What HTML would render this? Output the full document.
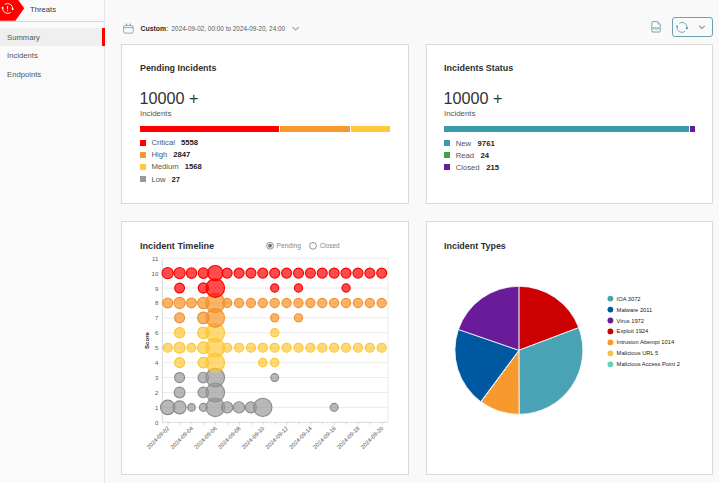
<!DOCTYPE html>
<html><head><meta charset="utf-8"><title>Threats - Summary</title>
<style>
html,body{margin:0;padding:0;}
body{width:719px;height:483px;overflow:hidden;position:relative;background:#f9f9f9;font-family:"Liberation Sans", sans-serif;}
</style></head><body>
<div style="position:absolute;left:0;top:0;width:104px;height:483px;background:#fafafa;border-right:1.5px solid #e6e6e6;"></div>
<div style="position:absolute;left:0;top:21px;width:104px;height:1px;background:#d6d6d6;"></div>
<svg style="position:absolute;left:0;top:0" width="30" height="22" viewBox="0 0 30 22">
<polygon points="0,-4.2 15.2,-4.2 24.2,8.3 15.4,20.8 0,20.8" fill="#ff0000"/>
<path d="M4.8,4.3 A5.1,5.1 0 0 1 12.6,9.3" fill="none" stroke="#fff" stroke-width="0.9"/>
<path d="M2.6,7.9 A5.1,5.1 0 0 0 10.6,12.5" fill="none" stroke="#fff" stroke-width="0.9"/>
<circle cx="2.6" cy="7.8" r="1.0" fill="#fff"/>
<circle cx="12.7" cy="9.1" r="1.0" fill="#fff"/>
<rect x="7.15" y="5.9" width="0.9" height="3.5" fill="#fff"/>
<rect x="7.15" y="10.3" width="0.9" height="1.0" fill="#fff"/>
</svg>
<div style="position:absolute;left:30px;top:4.73px;font-size:7.7px;line-height:normal;white-space:nowrap;color:#3a3a3a;font-weight:400;">Threats</div>
<div style="position:absolute;left:0;top:28px;width:102px;height:18px;background:#efefef;"></div>
<div style="position:absolute;left:102px;top:27.5px;width:2.5px;height:18.5px;background:#ff0000;"></div>
<div style="position:absolute;left:7px;top:33.03px;font-size:7.7px;line-height:normal;white-space:nowrap;color:#555;font-weight:400;">Summary</div>
<div style="position:absolute;left:7px;top:51.03px;font-size:7.7px;line-height:normal;white-space:nowrap;color:#555;font-weight:400;">Incidents</div>
<div style="position:absolute;left:7px;top:69.53px;font-size:7.7px;line-height:normal;white-space:nowrap;color:#555;font-weight:400;">Endpoints</div>
<svg style="position:absolute;left:122px;top:22px" width="14" height="13" viewBox="0 0 14 13">
<rect x="1.55" y="3.45" width="9.6" height="7.7" rx="1.9" fill="none" stroke="#6fa9b3" stroke-width="0.9"/>
<line x1="1.55" y1="5.6" x2="11.15" y2="5.6" stroke="#6fa9b3" stroke-width="0.9"/>
<line x1="4.5" y1="1.5" x2="4.5" y2="3.6" stroke="#6fa9b3" stroke-width="1"/>
<line x1="8.4" y1="1.5" x2="8.4" y2="3.6" stroke="#6fa9b3" stroke-width="1"/>
</svg>
<div style="position:absolute;left:140.5px;top:24.96px;font-size:6.9px;line-height:normal;white-space:nowrap;color:#2b2b2b;font-weight:700;">Custom<span style="font-weight:400">:</span></div>
<div style="position:absolute;left:171.5px;top:25.39px;font-size:6.42px;line-height:normal;white-space:nowrap;color:#5a5a5a;font-weight:400;">2024-09-02, 00:00 to 2024-09-20, 24:00</div>
<svg style="position:absolute;left:291px;top:24px" width="10" height="8" viewBox="0 0 10 8">
<polyline points="1.4,3.1 4.6,5.8 7.8,3.1" fill="none" stroke="#6fa9b3" stroke-width="1.1"/></svg>
<svg style="position:absolute;left:650px;top:20px" width="13" height="14" viewBox="0 0 13 14">
<path d="M1.9,2.7 Q1.9,1.7 2.9,1.7 L7.6,1.7 L10.2,4.3 L10.2,11.0 Q10.2,12.0 9.2,12.0 L2.9,12.0 Q1.9,12.0 1.9,11.0 Z" fill="#fff" stroke="#5f9ea8" stroke-width="0.95"/>
<path d="M7.7,2.6 L7.7,4.2 L9.3,4.2" fill="none" stroke="#5f9ea8" stroke-width="0.6"/>
<text x="2.7" y="9.8" font-size="4.0" font-weight="700" textLength="6.6" lengthAdjust="spacingAndGlyphs" fill="#5f9ea8" font-family="Liberation Sans">PDF</text>
</svg>
<div style="position:absolute;left:672px;top:17px;width:41px;height:19.6px;border:1px solid #6aa3ad;border-radius:3px;box-sizing:border-box;"></div>
<svg style="position:absolute;left:672px;top:18px" width="40" height="18" viewBox="0 0 40 18">
<path d="M7.28,5.21 A5.0,5.0 0 0 1 14.95,10.10" fill="none" stroke="#6aa3ad" stroke-width="0.9"/>
<path d="M5.06,8.62 A5.0,5.0 0 0 0 13.08,13.34" fill="none" stroke="#6aa3ad" stroke-width="0.9"/>
<circle cx="5.06" cy="8.62" r="1.0" fill="#5f9ea8"/>
<circle cx="14.92" cy="10.27" r="1.05" fill="#4f8f99"/>
<polyline points="27.2,7.8 30.0,10.6 32.8,7.8" fill="none" stroke="#444" stroke-width="0.9"/>
</svg>
<div style="position:absolute;left:121px;top:43.5px;width:288px;height:160.5px;background:#fff;border:1px solid #dadada;box-sizing:border-box;"></div>
<div style="position:absolute;left:425.5px;top:43.5px;width:287.5px;height:160.5px;background:#fff;border:1px solid #dadada;box-sizing:border-box;"></div>
<div style="position:absolute;left:121px;top:220.5px;width:288px;height:254px;background:#fff;border:1px solid #dadada;box-sizing:border-box;"></div>
<div style="position:absolute;left:425.5px;top:220.5px;width:287.5px;height:254px;background:#fff;border:1px solid #dadada;box-sizing:border-box;"></div>
<div style="position:absolute;left:140px;top:62.85px;font-size:8.9px;line-height:normal;white-space:nowrap;color:#2e2e2e;font-weight:700;">Pending Incidents</div>
<div style="position:absolute;left:139.5px;top:89.44px;font-size:16.2px;line-height:normal;white-space:nowrap;color:#333;font-weight:400;">10000 +</div>
<div style="position:absolute;left:140px;top:108.50px;font-size:7.85px;line-height:normal;white-space:nowrap;color:#555;font-weight:400;">Incidents</div>
<div style="position:absolute;left:139.5px;top:126px;width:139.5px;height:6px;background:#ff0000;"></div>
<div style="position:absolute;left:279.5px;top:126px;width:70.5px;height:6px;background:#f7992d;"></div>
<div style="position:absolute;left:350.5px;top:126px;width:39.5px;height:6px;background:#ffc83d;"></div>
<div style="position:absolute;left:139.5px;top:139.7px;width:6px;height:6px;background:#ff0000;"></div>
<div style="position:absolute;left:151.4px;top:138.23px;font-size:7.7px;white-space:nowrap;color:#555;">Critical<b style="color:#222;margin-left:6px">5558</b></div>
<div style="position:absolute;left:139.5px;top:151.8px;width:6px;height:6px;background:#f7992d;"></div>
<div style="position:absolute;left:151.4px;top:150.33px;font-size:7.7px;white-space:nowrap;color:#555;">High<b style="color:#222;margin-left:6px">2847</b></div>
<div style="position:absolute;left:139.5px;top:163.9px;width:6px;height:6px;background:#ffc83d;"></div>
<div style="position:absolute;left:151.4px;top:162.43px;font-size:7.7px;white-space:nowrap;color:#555;">Medium<b style="color:#222;margin-left:6px">1568</b></div>
<div style="position:absolute;left:139.5px;top:176.0px;width:6px;height:6px;background:#999999;"></div>
<div style="position:absolute;left:151.4px;top:174.53px;font-size:7.7px;white-space:nowrap;color:#555;">Low<b style="color:#222;margin-left:6px">27</b></div>
<div style="position:absolute;left:444px;top:62.78px;font-size:8.97px;line-height:normal;white-space:nowrap;color:#2e2e2e;font-weight:700;">Incidents Status</div>
<div style="position:absolute;left:443.5px;top:89.44px;font-size:16.2px;line-height:normal;white-space:nowrap;color:#333;font-weight:400;">10000 +</div>
<div style="position:absolute;left:444px;top:108.50px;font-size:7.85px;line-height:normal;white-space:nowrap;color:#555;font-weight:400;">Incidents</div>
<div style="position:absolute;left:444px;top:126px;width:245px;height:6px;background:#3a9bab;"></div>
<div style="position:absolute;left:689.8px;top:126px;width:5px;height:6px;background:#6a1b9a;"></div>
<div style="position:absolute;left:443.5px;top:140.0px;width:6px;height:6px;background:#3a9bab;"></div>
<div style="position:absolute;left:455.7px;top:138.53px;font-size:7.7px;white-space:nowrap;color:#555;">New<b style="color:#222;margin-left:6.5px">9761</b></div>
<div style="position:absolute;left:443.5px;top:152.1px;width:6px;height:6px;background:#43a047;"></div>
<div style="position:absolute;left:455.7px;top:150.63px;font-size:7.7px;white-space:nowrap;color:#555;">Read<b style="color:#222;margin-left:6.5px">24</b></div>
<div style="position:absolute;left:443.5px;top:164.2px;width:6px;height:6px;background:#6a1b9a;"></div>
<div style="position:absolute;left:455.7px;top:162.73px;font-size:7.7px;white-space:nowrap;color:#555;">Closed<b style="color:#222;margin-left:6.5px">215</b></div>
<div style="position:absolute;left:140px;top:240.66px;font-size:9.1px;line-height:normal;white-space:nowrap;color:#2e2e2e;font-weight:700;">Incident Timeline</div>
<div style="position:absolute;left:444px;top:240.71px;font-size:8.94px;line-height:normal;white-space:nowrap;color:#2e2e2e;font-weight:700;">Incident Types</div>
<svg style="position:absolute;left:0;top:0" width="719" height="483" viewBox="0 0 719 483">
<circle cx="270" cy="245.8" r="3.4" fill="#fff" stroke="#777" stroke-width="0.8"/>
<circle cx="270" cy="245.8" r="2.0" fill="#777"/>
<circle cx="313" cy="245.8" r="3.4" fill="#fff" stroke="#777" stroke-width="0.8"/>
<text x="276.6" y="248.1" font-size="6.6" fill="#888" font-family="Liberation Sans">Pending</text>
<text x="319.7" y="248.1" font-size="6.4" fill="#888" font-family="Liberation Sans">Closed</text>
<line x1="162.3" y1="407.38" x2="388.0" y2="407.38" stroke="#e6e6e6" stroke-width="0.8"/>
<line x1="162.3" y1="392.46" x2="388.0" y2="392.46" stroke="#e6e6e6" stroke-width="0.8"/>
<line x1="162.3" y1="377.55" x2="388.0" y2="377.55" stroke="#e6e6e6" stroke-width="0.8"/>
<line x1="162.3" y1="362.63" x2="388.0" y2="362.63" stroke="#e6e6e6" stroke-width="0.8"/>
<line x1="162.3" y1="347.71" x2="388.0" y2="347.71" stroke="#e6e6e6" stroke-width="0.8"/>
<line x1="162.3" y1="332.79" x2="388.0" y2="332.79" stroke="#e6e6e6" stroke-width="0.8"/>
<line x1="162.3" y1="317.87" x2="388.0" y2="317.87" stroke="#e6e6e6" stroke-width="0.8"/>
<line x1="162.3" y1="302.95" x2="388.0" y2="302.95" stroke="#e6e6e6" stroke-width="0.8"/>
<line x1="162.3" y1="288.04" x2="388.0" y2="288.04" stroke="#e6e6e6" stroke-width="0.8"/>
<line x1="162.3" y1="273.12" x2="388.0" y2="273.12" stroke="#e6e6e6" stroke-width="0.8"/>
<line x1="162.3" y1="258.20" x2="388.0" y2="258.20" stroke="#e6e6e6" stroke-width="0.8"/>
<line x1="388.0" y1="258.2" x2="388.0" y2="422.3" stroke="#e6e6e6" stroke-width="0.8"/>
<line x1="162.3" y1="258.2" x2="162.3" y2="422.3" stroke="#d0d0d0" stroke-width="0.8"/>
<line x1="162.3" y1="422.3" x2="388.0" y2="422.3" stroke="#d0d0d0" stroke-width="0.8"/>
<line x1="168.10" y1="422.3" x2="168.10" y2="424.90000000000003" stroke="#c8c8c8" stroke-width="0.7"/>
<line x1="179.99" y1="422.3" x2="179.99" y2="424.90000000000003" stroke="#c8c8c8" stroke-width="0.7"/>
<line x1="191.88" y1="422.3" x2="191.88" y2="424.90000000000003" stroke="#c8c8c8" stroke-width="0.7"/>
<line x1="203.77" y1="422.3" x2="203.77" y2="424.90000000000003" stroke="#c8c8c8" stroke-width="0.7"/>
<line x1="215.66" y1="422.3" x2="215.66" y2="424.90000000000003" stroke="#c8c8c8" stroke-width="0.7"/>
<line x1="227.55" y1="422.3" x2="227.55" y2="424.90000000000003" stroke="#c8c8c8" stroke-width="0.7"/>
<line x1="239.44" y1="422.3" x2="239.44" y2="424.90000000000003" stroke="#c8c8c8" stroke-width="0.7"/>
<line x1="251.33" y1="422.3" x2="251.33" y2="424.90000000000003" stroke="#c8c8c8" stroke-width="0.7"/>
<line x1="263.22" y1="422.3" x2="263.22" y2="424.90000000000003" stroke="#c8c8c8" stroke-width="0.7"/>
<line x1="275.11" y1="422.3" x2="275.11" y2="424.90000000000003" stroke="#c8c8c8" stroke-width="0.7"/>
<line x1="287.00" y1="422.3" x2="287.00" y2="424.90000000000003" stroke="#c8c8c8" stroke-width="0.7"/>
<line x1="298.89" y1="422.3" x2="298.89" y2="424.90000000000003" stroke="#c8c8c8" stroke-width="0.7"/>
<line x1="310.78" y1="422.3" x2="310.78" y2="424.90000000000003" stroke="#c8c8c8" stroke-width="0.7"/>
<line x1="322.67" y1="422.3" x2="322.67" y2="424.90000000000003" stroke="#c8c8c8" stroke-width="0.7"/>
<line x1="334.56" y1="422.3" x2="334.56" y2="424.90000000000003" stroke="#c8c8c8" stroke-width="0.7"/>
<line x1="346.45" y1="422.3" x2="346.45" y2="424.90000000000003" stroke="#c8c8c8" stroke-width="0.7"/>
<line x1="358.34" y1="422.3" x2="358.34" y2="424.90000000000003" stroke="#c8c8c8" stroke-width="0.7"/>
<line x1="370.23" y1="422.3" x2="370.23" y2="424.90000000000003" stroke="#c8c8c8" stroke-width="0.7"/>
<line x1="382.12" y1="422.3" x2="382.12" y2="424.90000000000003" stroke="#c8c8c8" stroke-width="0.7"/>
<text x="158.3" y="424.80" font-size="6" text-anchor="end" fill="#555" font-family="Liberation Sans">0</text>
<text x="158.3" y="409.88" font-size="6" text-anchor="end" fill="#555" font-family="Liberation Sans">1</text>
<text x="158.3" y="394.96" font-size="6" text-anchor="end" fill="#555" font-family="Liberation Sans">2</text>
<text x="158.3" y="380.05" font-size="6" text-anchor="end" fill="#555" font-family="Liberation Sans">3</text>
<text x="158.3" y="365.13" font-size="6" text-anchor="end" fill="#555" font-family="Liberation Sans">4</text>
<text x="158.3" y="350.21" font-size="6" text-anchor="end" fill="#555" font-family="Liberation Sans">5</text>
<text x="158.3" y="335.29" font-size="6" text-anchor="end" fill="#555" font-family="Liberation Sans">6</text>
<text x="158.3" y="320.37" font-size="6" text-anchor="end" fill="#555" font-family="Liberation Sans">7</text>
<text x="158.3" y="305.45" font-size="6" text-anchor="end" fill="#555" font-family="Liberation Sans">8</text>
<text x="158.3" y="290.54" font-size="6" text-anchor="end" fill="#555" font-family="Liberation Sans">9</text>
<text x="158.3" y="275.62" font-size="6" text-anchor="end" fill="#555" font-family="Liberation Sans">10</text>
<text x="158.3" y="260.70" font-size="6" text-anchor="end" fill="#555" font-family="Liberation Sans">11</text>
<text transform="translate(148.5,340.5) rotate(-90)" font-size="6.1" font-weight="700" text-anchor="middle" fill="#222" font-family="Liberation Sans">Score</text>
<text transform="translate(169.70,428.7) rotate(-45)" font-size="5.75" text-anchor="end" fill="#555" font-family="Liberation Sans">2024-09-02</text>
<text transform="translate(193.48,428.7) rotate(-45)" font-size="5.75" text-anchor="end" fill="#555" font-family="Liberation Sans">2024-09-04</text>
<text transform="translate(217.26,428.7) rotate(-45)" font-size="5.75" text-anchor="end" fill="#555" font-family="Liberation Sans">2024-09-06</text>
<text transform="translate(241.04,428.7) rotate(-45)" font-size="5.75" text-anchor="end" fill="#555" font-family="Liberation Sans">2024-09-08</text>
<text transform="translate(264.82,428.7) rotate(-45)" font-size="5.75" text-anchor="end" fill="#555" font-family="Liberation Sans">2024-09-10</text>
<text transform="translate(288.60,428.7) rotate(-45)" font-size="5.75" text-anchor="end" fill="#555" font-family="Liberation Sans">2024-09-12</text>
<text transform="translate(312.38,428.7) rotate(-45)" font-size="5.75" text-anchor="end" fill="#555" font-family="Liberation Sans">2024-09-14</text>
<text transform="translate(336.16,428.7) rotate(-45)" font-size="5.75" text-anchor="end" fill="#555" font-family="Liberation Sans">2024-09-16</text>
<text transform="translate(359.94,428.7) rotate(-45)" font-size="5.75" text-anchor="end" fill="#555" font-family="Liberation Sans">2024-09-18</text>
<text transform="translate(383.72,428.7) rotate(-45)" font-size="5.75" text-anchor="end" fill="#555" font-family="Liberation Sans">2024-09-20</text>
<circle cx="167.70" cy="407.38" r="7.20" fill="rgba(150,150,150,0.68)" stroke="#8c8c8c" stroke-opacity="1" stroke-width="1.15"/>
<circle cx="179.59" cy="407.38" r="6.50" fill="rgba(150,150,150,0.68)" stroke="#8c8c8c" stroke-opacity="1" stroke-width="1.15"/>
<circle cx="191.48" cy="407.38" r="3.80" fill="rgba(150,150,150,0.68)" stroke="#8c8c8c" stroke-opacity="1" stroke-width="1.15"/>
<circle cx="203.37" cy="407.38" r="4.00" fill="rgba(150,150,150,0.68)" stroke="#8c8c8c" stroke-opacity="1" stroke-width="1.15"/>
<circle cx="215.26" cy="407.38" r="9.30" fill="rgba(150,150,150,0.68)" stroke="#8c8c8c" stroke-opacity="1" stroke-width="1.15"/>
<circle cx="227.15" cy="407.38" r="5.60" fill="rgba(150,150,150,0.68)" stroke="#8c8c8c" stroke-opacity="1" stroke-width="1.15"/>
<circle cx="239.04" cy="407.38" r="5.60" fill="rgba(150,150,150,0.68)" stroke="#8c8c8c" stroke-opacity="1" stroke-width="1.15"/>
<circle cx="250.93" cy="407.38" r="5.50" fill="rgba(150,150,150,0.68)" stroke="#8c8c8c" stroke-opacity="1" stroke-width="1.15"/>
<circle cx="262.82" cy="407.38" r="9.10" fill="rgba(150,150,150,0.68)" stroke="#8c8c8c" stroke-opacity="1" stroke-width="1.15"/>
<circle cx="334.16" cy="407.38" r="4.00" fill="rgba(150,150,150,0.68)" stroke="#8c8c8c" stroke-opacity="1" stroke-width="1.15"/>
<circle cx="179.59" cy="392.46" r="5.40" fill="rgba(150,150,150,0.68)" stroke="#8c8c8c" stroke-opacity="1" stroke-width="1.15"/>
<circle cx="203.37" cy="392.46" r="5.30" fill="rgba(150,150,150,0.68)" stroke="#8c8c8c" stroke-opacity="1" stroke-width="1.15"/>
<circle cx="215.26" cy="392.46" r="9.30" fill="rgba(150,150,150,0.68)" stroke="#8c8c8c" stroke-opacity="1" stroke-width="1.15"/>
<circle cx="179.59" cy="377.55" r="5.00" fill="rgba(150,150,150,0.68)" stroke="#8c8c8c" stroke-opacity="1" stroke-width="1.15"/>
<circle cx="203.37" cy="377.55" r="5.30" fill="rgba(150,150,150,0.68)" stroke="#8c8c8c" stroke-opacity="1" stroke-width="1.15"/>
<circle cx="215.26" cy="377.55" r="9.30" fill="rgba(150,150,150,0.68)" stroke="#8c8c8c" stroke-opacity="1" stroke-width="1.15"/>
<circle cx="274.71" cy="377.55" r="3.90" fill="rgba(150,150,150,0.68)" stroke="#8c8c8c" stroke-opacity="1" stroke-width="1.15"/>
<circle cx="179.59" cy="362.63" r="5.00" fill="rgba(253,197,48,0.66)" stroke="#fdc530" stroke-opacity="1" stroke-width="1.15"/>
<circle cx="203.37" cy="362.63" r="5.30" fill="rgba(253,197,48,0.66)" stroke="#fdc530" stroke-opacity="1" stroke-width="1.15"/>
<circle cx="215.26" cy="362.63" r="9.30" fill="rgba(253,197,48,0.66)" stroke="#fdc530" stroke-opacity="1" stroke-width="1.15"/>
<circle cx="262.82" cy="362.63" r="4.20" fill="rgba(253,197,48,0.66)" stroke="#fdc530" stroke-opacity="1" stroke-width="1.15"/>
<circle cx="274.71" cy="362.63" r="4.20" fill="rgba(253,197,48,0.66)" stroke="#fdc530" stroke-opacity="1" stroke-width="1.15"/>
<circle cx="167.70" cy="347.71" r="4.50" fill="rgba(253,197,48,0.66)" stroke="#fdc530" stroke-opacity="1" stroke-width="1.15"/>
<circle cx="179.59" cy="347.71" r="5.50" fill="rgba(253,197,48,0.66)" stroke="#fdc530" stroke-opacity="1" stroke-width="1.15"/>
<circle cx="191.48" cy="347.71" r="4.40" fill="rgba(253,197,48,0.66)" stroke="#fdc530" stroke-opacity="1" stroke-width="1.15"/>
<circle cx="203.37" cy="347.71" r="5.80" fill="rgba(253,197,48,0.66)" stroke="#fdc530" stroke-opacity="1" stroke-width="1.15"/>
<circle cx="215.26" cy="347.71" r="9.30" fill="rgba(253,197,48,0.66)" stroke="#fdc530" stroke-opacity="1" stroke-width="1.15"/>
<circle cx="227.15" cy="347.71" r="4.50" fill="rgba(253,197,48,0.66)" stroke="#fdc530" stroke-opacity="1" stroke-width="1.15"/>
<circle cx="239.04" cy="347.71" r="4.50" fill="rgba(253,197,48,0.66)" stroke="#fdc530" stroke-opacity="1" stroke-width="1.15"/>
<circle cx="250.93" cy="347.71" r="4.50" fill="rgba(253,197,48,0.66)" stroke="#fdc530" stroke-opacity="1" stroke-width="1.15"/>
<circle cx="262.82" cy="347.71" r="4.50" fill="rgba(253,197,48,0.66)" stroke="#fdc530" stroke-opacity="1" stroke-width="1.15"/>
<circle cx="274.71" cy="347.71" r="4.50" fill="rgba(253,197,48,0.66)" stroke="#fdc530" stroke-opacity="1" stroke-width="1.15"/>
<circle cx="286.60" cy="347.71" r="4.50" fill="rgba(253,197,48,0.66)" stroke="#fdc530" stroke-opacity="1" stroke-width="1.15"/>
<circle cx="298.49" cy="347.71" r="4.50" fill="rgba(253,197,48,0.66)" stroke="#fdc530" stroke-opacity="1" stroke-width="1.15"/>
<circle cx="310.38" cy="347.71" r="4.50" fill="rgba(253,197,48,0.66)" stroke="#fdc530" stroke-opacity="1" stroke-width="1.15"/>
<circle cx="322.27" cy="347.71" r="4.50" fill="rgba(253,197,48,0.66)" stroke="#fdc530" stroke-opacity="1" stroke-width="1.15"/>
<circle cx="334.16" cy="347.71" r="4.50" fill="rgba(253,197,48,0.66)" stroke="#fdc530" stroke-opacity="1" stroke-width="1.15"/>
<circle cx="346.05" cy="347.71" r="4.50" fill="rgba(253,197,48,0.66)" stroke="#fdc530" stroke-opacity="1" stroke-width="1.15"/>
<circle cx="357.94" cy="347.71" r="4.50" fill="rgba(253,197,48,0.66)" stroke="#fdc530" stroke-opacity="1" stroke-width="1.15"/>
<circle cx="369.83" cy="347.71" r="4.50" fill="rgba(253,197,48,0.66)" stroke="#fdc530" stroke-opacity="1" stroke-width="1.15"/>
<circle cx="381.72" cy="347.71" r="4.50" fill="rgba(253,197,48,0.66)" stroke="#fdc530" stroke-opacity="1" stroke-width="1.15"/>
<circle cx="179.59" cy="332.79" r="5.20" fill="rgba(253,197,48,0.66)" stroke="#fdc530" stroke-opacity="1" stroke-width="1.15"/>
<circle cx="203.37" cy="332.79" r="5.80" fill="rgba(253,197,48,0.66)" stroke="#fdc530" stroke-opacity="1" stroke-width="1.15"/>
<circle cx="215.26" cy="332.79" r="9.30" fill="rgba(253,197,48,0.66)" stroke="#fdc530" stroke-opacity="1" stroke-width="1.15"/>
<circle cx="274.71" cy="332.79" r="4.10" fill="rgba(253,197,48,0.66)" stroke="#fdc530" stroke-opacity="1" stroke-width="1.15"/>
<circle cx="179.59" cy="317.87" r="5.00" fill="rgba(246,144,32,0.68)" stroke="#f39230" stroke-opacity="1" stroke-width="1.15"/>
<circle cx="203.37" cy="317.87" r="5.80" fill="rgba(246,144,32,0.68)" stroke="#f39230" stroke-opacity="1" stroke-width="1.15"/>
<circle cx="215.26" cy="317.87" r="9.30" fill="rgba(246,144,32,0.68)" stroke="#f39230" stroke-opacity="1" stroke-width="1.15"/>
<circle cx="274.71" cy="317.87" r="4.10" fill="rgba(246,144,32,0.68)" stroke="#f39230" stroke-opacity="1" stroke-width="1.15"/>
<circle cx="298.49" cy="317.87" r="4.10" fill="rgba(246,144,32,0.68)" stroke="#f39230" stroke-opacity="1" stroke-width="1.15"/>
<circle cx="167.70" cy="302.95" r="5.00" fill="rgba(246,144,32,0.68)" stroke="#f39230" stroke-opacity="1" stroke-width="1.15"/>
<circle cx="179.59" cy="302.95" r="5.60" fill="rgba(246,144,32,0.68)" stroke="#f39230" stroke-opacity="1" stroke-width="1.15"/>
<circle cx="191.48" cy="302.95" r="4.90" fill="rgba(246,144,32,0.68)" stroke="#f39230" stroke-opacity="1" stroke-width="1.15"/>
<circle cx="203.37" cy="302.95" r="5.70" fill="rgba(246,144,32,0.68)" stroke="#f39230" stroke-opacity="1" stroke-width="1.15"/>
<circle cx="215.26" cy="302.95" r="9.60" fill="rgba(246,144,32,0.68)" stroke="#f39230" stroke-opacity="1" stroke-width="1.15"/>
<circle cx="227.15" cy="302.95" r="4.60" fill="rgba(246,144,32,0.68)" stroke="#f39230" stroke-opacity="1" stroke-width="1.15"/>
<circle cx="239.04" cy="302.95" r="4.60" fill="rgba(246,144,32,0.68)" stroke="#f39230" stroke-opacity="1" stroke-width="1.15"/>
<circle cx="250.93" cy="302.95" r="4.60" fill="rgba(246,144,32,0.68)" stroke="#f39230" stroke-opacity="1" stroke-width="1.15"/>
<circle cx="262.82" cy="302.95" r="4.60" fill="rgba(246,144,32,0.68)" stroke="#f39230" stroke-opacity="1" stroke-width="1.15"/>
<circle cx="274.71" cy="302.95" r="4.60" fill="rgba(246,144,32,0.68)" stroke="#f39230" stroke-opacity="1" stroke-width="1.15"/>
<circle cx="286.60" cy="302.95" r="4.60" fill="rgba(246,144,32,0.68)" stroke="#f39230" stroke-opacity="1" stroke-width="1.15"/>
<circle cx="298.49" cy="302.95" r="4.60" fill="rgba(246,144,32,0.68)" stroke="#f39230" stroke-opacity="1" stroke-width="1.15"/>
<circle cx="310.38" cy="302.95" r="4.60" fill="rgba(246,144,32,0.68)" stroke="#f39230" stroke-opacity="1" stroke-width="1.15"/>
<circle cx="322.27" cy="302.95" r="4.60" fill="rgba(246,144,32,0.68)" stroke="#f39230" stroke-opacity="1" stroke-width="1.15"/>
<circle cx="334.16" cy="302.95" r="4.60" fill="rgba(246,144,32,0.68)" stroke="#f39230" stroke-opacity="1" stroke-width="1.15"/>
<circle cx="346.05" cy="302.95" r="4.60" fill="rgba(246,144,32,0.68)" stroke="#f39230" stroke-opacity="1" stroke-width="1.15"/>
<circle cx="357.94" cy="302.95" r="4.60" fill="rgba(246,144,32,0.68)" stroke="#f39230" stroke-opacity="1" stroke-width="1.15"/>
<circle cx="369.83" cy="302.95" r="4.60" fill="rgba(246,144,32,0.68)" stroke="#f39230" stroke-opacity="1" stroke-width="1.15"/>
<circle cx="381.72" cy="302.95" r="4.60" fill="rgba(246,144,32,0.68)" stroke="#f39230" stroke-opacity="1" stroke-width="1.15"/>
<circle cx="179.59" cy="288.04" r="4.90" fill="rgba(255,0,0,0.7)" stroke="#ff0000" stroke-opacity="1" stroke-width="1.15"/>
<circle cx="203.37" cy="288.04" r="5.10" fill="rgba(255,0,0,0.7)" stroke="#ff0000" stroke-opacity="1" stroke-width="1.15"/>
<circle cx="215.26" cy="288.04" r="9.30" fill="rgba(255,0,0,0.7)" stroke="#ff0000" stroke-opacity="1" stroke-width="1.15"/>
<circle cx="274.71" cy="288.04" r="4.10" fill="rgba(255,0,0,0.7)" stroke="#ff0000" stroke-opacity="1" stroke-width="1.15"/>
<circle cx="298.49" cy="288.04" r="4.10" fill="rgba(255,0,0,0.7)" stroke="#ff0000" stroke-opacity="1" stroke-width="1.15"/>
<circle cx="346.05" cy="288.04" r="4.10" fill="rgba(255,0,0,0.7)" stroke="#ff0000" stroke-opacity="1" stroke-width="1.15"/>
<circle cx="167.70" cy="273.12" r="5.60" fill="rgba(255,0,0,0.7)" stroke="#ff0000" stroke-opacity="1" stroke-width="1.15"/>
<circle cx="179.59" cy="273.12" r="5.60" fill="rgba(255,0,0,0.7)" stroke="#ff0000" stroke-opacity="1" stroke-width="1.15"/>
<circle cx="191.48" cy="273.12" r="5.20" fill="rgba(255,0,0,0.7)" stroke="#ff0000" stroke-opacity="1" stroke-width="1.15"/>
<circle cx="203.37" cy="273.12" r="5.20" fill="rgba(255,0,0,0.7)" stroke="#ff0000" stroke-opacity="1" stroke-width="1.15"/>
<circle cx="215.26" cy="273.12" r="7.60" fill="rgba(255,0,0,0.7)" stroke="#ff0000" stroke-opacity="1" stroke-width="1.15"/>
<circle cx="227.15" cy="273.12" r="5.00" fill="rgba(255,0,0,0.7)" stroke="#ff0000" stroke-opacity="1" stroke-width="1.15"/>
<circle cx="239.04" cy="273.12" r="5.00" fill="rgba(255,0,0,0.7)" stroke="#ff0000" stroke-opacity="1" stroke-width="1.15"/>
<circle cx="250.93" cy="273.12" r="5.00" fill="rgba(255,0,0,0.7)" stroke="#ff0000" stroke-opacity="1" stroke-width="1.15"/>
<circle cx="262.82" cy="273.12" r="5.00" fill="rgba(255,0,0,0.7)" stroke="#ff0000" stroke-opacity="1" stroke-width="1.15"/>
<circle cx="274.71" cy="273.12" r="5.00" fill="rgba(255,0,0,0.7)" stroke="#ff0000" stroke-opacity="1" stroke-width="1.15"/>
<circle cx="286.60" cy="273.12" r="5.00" fill="rgba(255,0,0,0.7)" stroke="#ff0000" stroke-opacity="1" stroke-width="1.15"/>
<circle cx="298.49" cy="273.12" r="5.00" fill="rgba(255,0,0,0.7)" stroke="#ff0000" stroke-opacity="1" stroke-width="1.15"/>
<circle cx="310.38" cy="273.12" r="5.00" fill="rgba(255,0,0,0.7)" stroke="#ff0000" stroke-opacity="1" stroke-width="1.15"/>
<circle cx="322.27" cy="273.12" r="5.00" fill="rgba(255,0,0,0.7)" stroke="#ff0000" stroke-opacity="1" stroke-width="1.15"/>
<circle cx="334.16" cy="273.12" r="5.00" fill="rgba(255,0,0,0.7)" stroke="#ff0000" stroke-opacity="1" stroke-width="1.15"/>
<circle cx="346.05" cy="273.12" r="5.00" fill="rgba(255,0,0,0.7)" stroke="#ff0000" stroke-opacity="1" stroke-width="1.15"/>
<circle cx="357.94" cy="273.12" r="5.00" fill="rgba(255,0,0,0.7)" stroke="#ff0000" stroke-opacity="1" stroke-width="1.15"/>
<circle cx="369.83" cy="273.12" r="5.00" fill="rgba(255,0,0,0.7)" stroke="#ff0000" stroke-opacity="1" stroke-width="1.15"/>
<circle cx="381.72" cy="273.12" r="5.00" fill="rgba(255,0,0,0.7)" stroke="#ff0000" stroke-opacity="1" stroke-width="1.15"/>
<path d="M518.9,350.3 L518.90,286.30 A64,64 0 0 1 578.75,327.64 Z" fill="#cc0000" stroke="#fff" stroke-width="0.8"/>
<path d="M518.9,350.3 L578.75,327.64 A64,64 0 0 1 519.06,414.30 Z" fill="#4aa3b5" stroke="#fff" stroke-width="0.8"/>
<path d="M518.9,350.3 L519.06,414.30 A64,64 0 0 1 480.96,401.84 Z" fill="#f7992d" stroke="#fff" stroke-width="0.8"/>
<path d="M518.9,350.3 L480.96,401.84 A64,64 0 0 1 480.80,401.72 Z" fill="#f5c242" stroke="#fff" stroke-width="0.8"/>
<path d="M518.9,350.3 L480.80,401.72 A64,64 0 0 1 480.73,401.67 Z" fill="#5bd6b0" stroke="#fff" stroke-width="0.8"/>
<path d="M518.9,350.3 L480.73,401.67 A64,64 0 0 1 458.39,329.46 Z" fill="#0059a0" stroke="#fff" stroke-width="0.8"/>
<path d="M518.9,350.3 L458.39,329.46 A64,64 0 0 1 518.90,286.30 Z" fill="#6a1b9a" stroke="#fff" stroke-width="0.8"/>
<circle cx="610.4" cy="298.60" r="2.9" fill="#4aa3b5"/>
<text x="616.6" y="300.60" font-size="5.75" fill="#222" font-family="Liberation Sans">IOA 3072</text>
<circle cx="610.4" cy="309.55" r="2.9" fill="#0059a0"/>
<text x="616.6" y="311.55" font-size="5.75" fill="#222" font-family="Liberation Sans">Malware 2011</text>
<circle cx="610.4" cy="320.50" r="2.9" fill="#6a1b9a"/>
<text x="616.6" y="322.50" font-size="5.75" fill="#222" font-family="Liberation Sans">Virus 1972</text>
<circle cx="610.4" cy="331.45" r="2.9" fill="#cc0000"/>
<text x="616.6" y="333.45" font-size="5.75" fill="#222" font-family="Liberation Sans">Exploit 1924</text>
<circle cx="610.4" cy="342.40" r="2.9" fill="#f7992d"/>
<text x="616.6" y="344.40" font-size="5.75" fill="#222" font-family="Liberation Sans">Intrusion Attempt 1014</text>
<circle cx="610.4" cy="353.35" r="2.9" fill="#f5c242"/>
<text x="616.6" y="355.35" font-size="5.75" fill="#222" font-family="Liberation Sans">Malicious URL 5</text>
<circle cx="610.4" cy="364.30" r="2.9" fill="#5bd6b0"/>
<text x="616.6" y="366.30" font-size="5.75" fill="#222" font-family="Liberation Sans">Malicious Access Point 2</text>
</svg>
</body></html>
